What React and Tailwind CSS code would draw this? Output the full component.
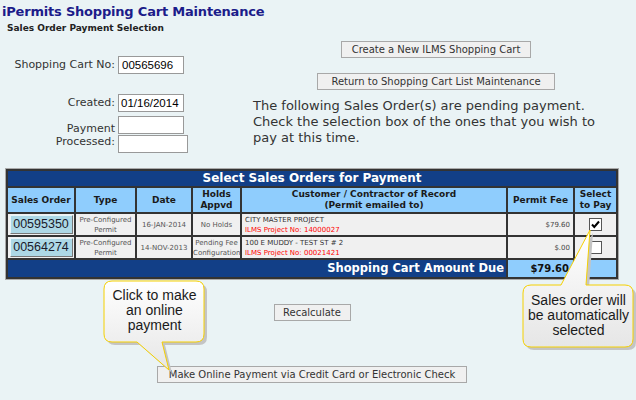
import React from 'react'

const verdana = { fontFamily: '"DejaVu Sans", Verdana, sans-serif' }
const arial = { fontFamily: '"Liberation Sans", Arial, sans-serif' }

function GrayButton({ children, className }) {
  return (
    <button
      className={`h-[17px] bg-[#f0f0f0] border border-[#a8a8a8] text-[#333] text-[10px] leading-[15px] whitespace-nowrap ${className}`}
    >
      {children}
    </button>
  )
}

function OrderButton({ number }) {
  return (
    <div className="mx-auto w-[63px] h-[19px] bg-[#add8e6] border border-t-[#e8f4f8] border-l-[#e8f4f8] border-r-[#777] border-b-[#777] flex items-center justify-center text-[12.5px] leading-none text-[#1a1a2a]" style={arial}>
      {number}
    </div>
  )
}

function Checkbox({ checked }) {
  return (
    <div className="mx-auto w-[13px] h-[13px] bg-white border border-[#555] flex items-center justify-center">
      {checked && (
        <svg width="11" height="11" viewBox="0 0 11 11">
          <path d="M2 5.5 L4.3 8 L9 2.5" fill="none" stroke="#000" strokeWidth="2" />
        </svg>
      )}
    </div>
  )
}

const rows = [
  {
    order: '00595350',
    date: '16-JAN-2014',
    holds: ['No Holds'],
    customer: 'CITY MASTER PROJECT',
    project: 'ILMS Project No: 14000027',
    fee: '$79.60',
    checked: true,
  },
  {
    order: '00564274',
    date: '14-NOV-2013',
    holds: ['Pending Fee', 'Configuration'],
    customer: '100 E MUDDY - TEST ST # 2',
    project: 'ILMS Project No: 00021421',
    fee: '$.00',
    checked: false,
  },
]

function Callouts() {
  return (
    <>
      <svg className="absolute inset-0 pointer-events-none" width="636" height="400">
        <defs>
          <linearGradient id="bubble" x1="0" y1="0" x2="0" y2="1">
            <stop offset="0" stopColor="#ffffff" />
            <stop offset="1" stopColor="#e6e6e6" />
          </linearGradient>
        </defs>
        <g transform="translate(3,3)" fill="#c4c4c4">
          <path d="M112,281 H196 Q204,281 204,289 V334 Q204,342 196,342 H162 L169,370 L137,342 H112 Q104,342 104,334 V289 Q104,281 112,281 Z" />
          <path d="M531,285 H561 L590,230 L586,285 H625 Q633,285 633,293 V339 Q633,347 625,347 H531 Q523,347 523,339 V293 Q523,285 531,285 Z" />
        </g>
        <path d="M112,281 H196 Q204,281 204,289 V334 Q204,342 196,342 H162 L169,370 L137,342 H112 Q104,342 104,334 V289 Q104,281 112,281 Z" fill="url(#bubble)" stroke="#f5d000" strokeWidth="1" />
        <path d="M531,285 H561 L590,230 L586,285 H625 Q633,285 633,293 V339 Q633,347 625,347 H531 Q523,347 523,339 V293 Q523,285 531,285 Z" fill="url(#bubble)" stroke="#f5d000" strokeWidth="1" />
      </svg>
      <div className="absolute left-[104px] top-[288px] w-[101px] text-center text-[14px] leading-[15px] text-[#1a1a1a]" style={arial}>
        Click to make<br />an online<br />payment
      </div>
      <div className="absolute left-[523px] top-[293px] w-[111px] text-center text-[14px] leading-[15px] text-[#1a1a1a]" style={arial}>
        Sales order will<br />be automatically<br />selected
      </div>
    </>
  )
}

export default function App() {
  return (
    <div className="relative w-[636px] h-[400px] overflow-hidden bg-[#eaf3f5] text-[#333]" style={verdana}>
      <h1 className="pl-[2px] pt-[3px] text-[13px] tracking-[-0.2px] leading-[18px] font-bold text-[#1c1c8a]">
        iPermits Shopping Cart Maintenance
      </h1>
      <div className="pl-[7px] mt-[1px] text-[9px] leading-[13px] font-bold text-[#222]">
        Sales Order Payment Selection
      </div>

      <div className="flex h-[133px] pt-[6px]">
        <div className="w-[253px] pt-[15px] text-[11px] text-[#333]">
          <div className="flex items-center">
            <span className="w-[118px] text-right pr-[3px]">Shopping Cart No:</span>
            <div className="w-[66px] h-[18px] bg-white border border-[#999] px-[3px] text-[11.5px] leading-[16px] text-black" style={arial}>00565696</div>
          </div>
          <div className="flex items-center mt-[20px]">
            <span className="w-[118px] text-right pr-[3px]">Created:</span>
            <div className="w-[66px] h-[18px] bg-white border border-[#999] px-[2px] text-[11.5px] leading-[16px] text-black" style={arial}>01/16/2014</div>
          </div>
          <div className="flex items-center mt-[4px]">
            <span className="w-[118px] text-right pr-[3px] leading-[13px]">Payment<br />Processed:</span>
            <div className="flex flex-col gap-[1px]">
              <div className="w-[66px] h-[18px] bg-white border border-[#999]" />
              <div className="w-[70px] h-[18px] bg-white border border-[#999]" />
            </div>
          </div>
        </div>

        <div className="w-[366px] flex flex-col items-center">
          <GrayButton className="w-[190px]">Create a New ILMS Shopping Cart</GrayButton>
          <GrayButton className="w-[238px] mt-[15px]">Return to Shopping Cart List Maintenance</GrayButton>
          <p className="self-start mt-[8px] text-[13px] leading-[16px] text-[#333]">
            The following Sales Order(s) are pending payment.<br />
            Check the selection box of the ones that you wish to<br />
            pay at this time.
          </p>
        </div>
      </div>

      <table className="ml-[5px] w-[614px] border-separate border-spacing-[2px] bg-[#333] border border-[#aaa] table-fixed">
        <colgroup>
          <col className="w-[66px]" />
          <col className="w-[59px]" />
          <col className="w-[54px]" />
          <col className="w-[47px]" />
          <col />
          <col className="w-[65px]" />
          <col className="w-[41px]" />
        </colgroup>
        <thead>
          <tr>
            <th colSpan={7} className="bg-[#123f87] h-[15px] text-white text-[12px] leading-[15px] font-bold text-center p-0">
              Select Sales Orders for Payment
            </th>
          </tr>
          <tr className="bg-[#8fcdfd] text-[9px] leading-[11px] font-bold text-[#1a1a1a]">
            <th className="h-[24px] p-0">Sales Order</th>
            <th className="p-0">Type</th>
            <th className="p-0">Date</th>
            <th className="p-0">Holds<br />Appvd</th>
            <th className="p-0">Customer / Contractor of Record<br />(Permit emailed to)</th>
            <th className="p-0">Permit Fee</th>
            <th className="p-0">Select<br />to Pay</th>
          </tr>
        </thead>
        <tbody>
          {rows.map((r) => (
            <tr key={r.order} className="bg-[#f0f0f0] text-[7px] leading-[10px] text-[#555]">
              <td className="h-[21px] p-0">
                <OrderButton number={r.order} />
              </td>
              <td className="p-0 text-center">Pre-Configured<br />Permit</td>
              <td className="p-0 text-center">{r.date}</td>
              <td className="p-0 text-center whitespace-nowrap">
                {r.holds.map((h) => (
                  <div key={h}>{h}</div>
                ))}
              </td>
              <td className="p-0 pl-[3px] leading-[10px]">
                <div className="text-[#333]">{r.customer}</div>
                <div className="text-[#ff0000]">{r.project}</div>
              </td>
              <td className="p-0 pr-[3px] text-right text-[#444]">{r.fee}</td>
              <td className="p-0">
                <Checkbox checked={r.checked} />
              </td>
            </tr>
          ))}
          <tr>
            <td colSpan={5} className="bg-[#123f87] h-[17px] p-0 pr-[2px] text-right text-white text-[11.5px] leading-[15px] font-bold">
              Shopping Cart Amount Due
            </td>
            <td className="bg-[#8fcdfd] p-0 pr-[4px] text-right text-[10px] font-bold text-[#111]">$79.60</td>
            <td className="bg-[#8fcdfd] p-0" />
          </tr>
        </tbody>
      </table>

      <div className="w-[614px] ml-[5px] flex flex-col items-center">
        <GrayButton className="w-[77px] mt-[24px]">Recalculate</GrayButton>
        <GrayButton className="w-[310px] mt-[45px]">Make Online Payment via Credit Card or Electronic Check</GrayButton>
      </div>

      <Callouts />
    </div>
  )
}
